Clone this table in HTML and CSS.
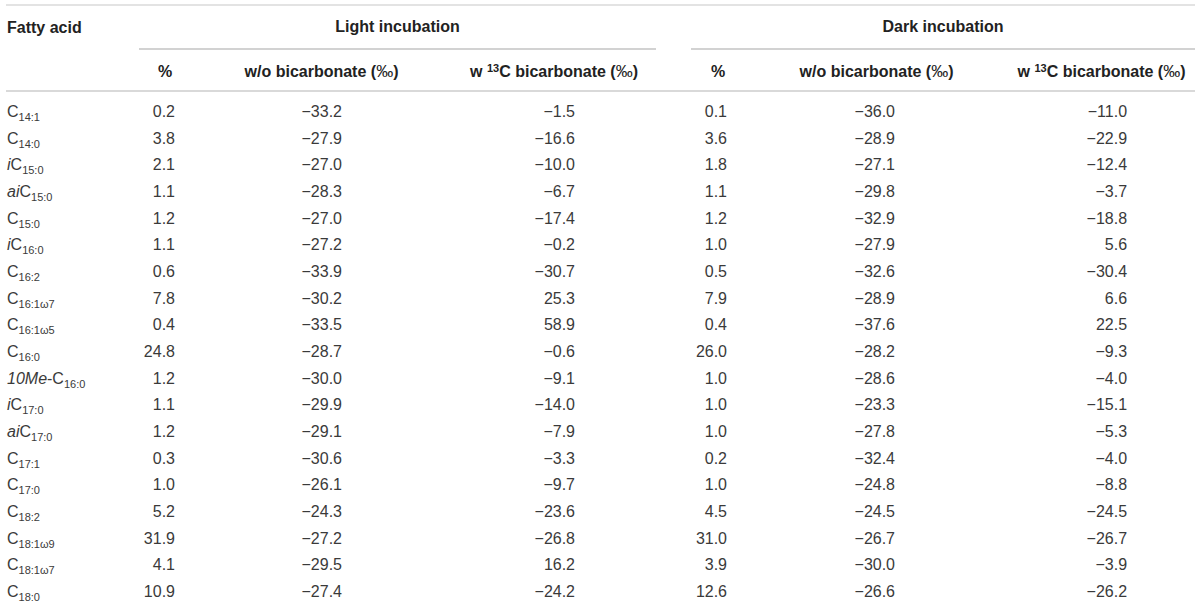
FILE: index.html
```html
<!DOCTYPE html>
<html lang="en">
<head>
    <meta charset="UTF-8">
    <meta name="viewport" content="width=device-width, initial-scale=1.0">
    <title>Fatty acid isotope table</title>
    <link rel="stylesheet" href="styles.css">
</head>
<body>
    <table class="fa-table">
        <colgroup>
            <col class="col-name">
            <col class="col-pct">
            <col class="col-wo">
            <col class="col-w13">
            <col class="col-gap">
            <col class="col-pct2">
            <col class="col-wo2">
            <col class="col-w132">
        </colgroup>
        <thead>
            <tr class="head-top">
                <th class="name-head">Fatty acid</th>
                <th colspan="3" class="group-head">Light incubation</th>
                <th class="gap"></th>
                <th colspan="3" class="group-head">Dark incubation</th>
            </tr>
            <tr class="head-sub">
                <th></th>
                <th>%</th>
                <th>w/o bicarbonate (<span class="permil">‰</span>)</th>
                <th>w <sup>13</sup>C bicarbonate (<span class="permil">‰</span>)</th>
                <th class="gap"></th>
                <th>%</th>
                <th>w/o bicarbonate (<span class="permil">‰</span>)</th>
                <th>w <sup>13</sup>C bicarbonate (<span class="permil">‰</span>)</th>
            </tr>
        </thead>
        <tbody>
            <tr class="first">
                <td>C<sub>14:1</sub></td>
                <td class="n1">0.2</td><td class="n2">−33.2</td><td class="n3">−1.5</td><td></td>
                <td class="n4">0.1</td><td class="n5">−36.0</td><td class="n6">−11.0</td>
            </tr>
            <tr>
                <td>C<sub>14:0</sub></td>
                <td class="n1">3.8</td><td class="n2">−27.9</td><td class="n3">−16.6</td><td></td>
                <td class="n4">3.6</td><td class="n5">−28.9</td><td class="n6">−22.9</td>
            </tr>
            <tr>
                <td><i>i</i>C<sub>15:0</sub></td>
                <td class="n1">2.1</td><td class="n2">−27.0</td><td class="n3">−10.0</td><td></td>
                <td class="n4">1.8</td><td class="n5">−27.1</td><td class="n6">−12.4</td>
            </tr>
            <tr>
                <td><i>ai</i>C<sub>15:0</sub></td>
                <td class="n1">1.1</td><td class="n2">−28.3</td><td class="n3">−6.7</td><td></td>
                <td class="n4">1.1</td><td class="n5">−29.8</td><td class="n6">−3.7</td>
            </tr>
            <tr>
                <td>C<sub>15:0</sub></td>
                <td class="n1">1.2</td><td class="n2">−27.0</td><td class="n3">−17.4</td><td></td>
                <td class="n4">1.2</td><td class="n5">−32.9</td><td class="n6">−18.8</td>
            </tr>
            <tr>
                <td><i>i</i>C<sub>16:0</sub></td>
                <td class="n1">1.1</td><td class="n2">−27.2</td><td class="n3">−0.2</td><td></td>
                <td class="n4">1.0</td><td class="n5">−27.9</td><td class="n6">5.6</td>
            </tr>
            <tr>
                <td>C<sub>16:2</sub></td>
                <td class="n1">0.6</td><td class="n2">−33.9</td><td class="n3">−30.7</td><td></td>
                <td class="n4">0.5</td><td class="n5">−32.6</td><td class="n6">−30.4</td>
            </tr>
            <tr>
                <td>C<sub>16:1ω7</sub></td>
                <td class="n1">7.8</td><td class="n2">−30.2</td><td class="n3">25.3</td><td></td>
                <td class="n4">7.9</td><td class="n5">−28.9</td><td class="n6">6.6</td>
            </tr>
            <tr>
                <td>C<sub>16:1ω5</sub></td>
                <td class="n1">0.4</td><td class="n2">−33.5</td><td class="n3">58.9</td><td></td>
                <td class="n4">0.4</td><td class="n5">−37.6</td><td class="n6">22.5</td>
            </tr>
            <tr>
                <td>C<sub>16:0</sub></td>
                <td class="n1">24.8</td><td class="n2">−28.7</td><td class="n3">−0.6</td><td></td>
                <td class="n4">26.0</td><td class="n5">−28.2</td><td class="n6">−9.3</td>
            </tr>
            <tr>
                <td><i>10Me</i>-C<sub>16:0</sub></td>
                <td class="n1">1.2</td><td class="n2">−30.0</td><td class="n3">−9.1</td><td></td>
                <td class="n4">1.0</td><td class="n5">−28.6</td><td class="n6">−4.0</td>
            </tr>
            <tr>
                <td><i>i</i>C<sub>17:0</sub></td>
                <td class="n1">1.1</td><td class="n2">−29.9</td><td class="n3">−14.0</td><td></td>
                <td class="n4">1.0</td><td class="n5">−23.3</td><td class="n6">−15.1</td>
            </tr>
            <tr>
                <td><i>ai</i>C<sub>17:0</sub></td>
                <td class="n1">1.2</td><td class="n2">−29.1</td><td class="n3">−7.9</td><td></td>
                <td class="n4">1.0</td><td class="n5">−27.8</td><td class="n6">−5.3</td>
            </tr>
            <tr>
                <td>C<sub>17:1</sub></td>
                <td class="n1">0.3</td><td class="n2">−30.6</td><td class="n3">−3.3</td><td></td>
                <td class="n4">0.2</td><td class="n5">−32.4</td><td class="n6">−4.0</td>
            </tr>
            <tr>
                <td>C<sub>17:0</sub></td>
                <td class="n1">1.0</td><td class="n2">−26.1</td><td class="n3">−9.7</td><td></td>
                <td class="n4">1.0</td><td class="n5">−24.8</td><td class="n6">−8.8</td>
            </tr>
            <tr>
                <td>C<sub>18:2</sub></td>
                <td class="n1">5.2</td><td class="n2">−24.3</td><td class="n3">−23.6</td><td></td>
                <td class="n4">4.5</td><td class="n5">−24.5</td><td class="n6">−24.5</td>
            </tr>
            <tr>
                <td>C<sub>18:1ω9</sub></td>
                <td class="n1">31.9</td><td class="n2">−27.2</td><td class="n3">−26.8</td><td></td>
                <td class="n4">31.0</td><td class="n5">−26.7</td><td class="n6">−26.7</td>
            </tr>
            <tr>
                <td>C<sub>18:1ω7</sub></td>
                <td class="n1">4.1</td><td class="n2">−29.5</td><td class="n3">16.2</td><td></td>
                <td class="n4">3.9</td><td class="n5">−30.0</td><td class="n6">−3.9</td>
            </tr>
            <tr>
                <td>C<sub>18:0</sub></td>
                <td class="n1">10.9</td><td class="n2">−27.4</td><td class="n3">−24.2</td><td></td>
                <td class="n4">12.6</td><td class="n5">−26.6</td><td class="n6">−26.2</td>
            </tr>
        </tbody>
    </table>
</body>
</html>
```

FILE: styles.css
```css
body {
    margin: 0;
    padding: 0;
    background-color: white;
    font-family: 'Liberation Sans', Arial, sans-serif;
    font-size: 16px;
    color: #3a3a3a;
}

.fa-table {
    width: 1189px;
    margin: 4px 5px 0 6px;
    border-collapse: separate;
    border-spacing: 0;
    table-layout: fixed;
}

.col-name { width: 133px; }
.col-pct { width: 52px; }
.col-wo { width: 261px; }
.col-w13 { width: 204px; }
.col-gap { width: 35px; }
.col-pct2 { width: 54px; }
.col-wo2 { width: 263px; }
.col-w132 { width: 187px; }

.fa-table th {
    font-weight: bold;
    color: #222;
    line-height: 20px;
    text-align: center;
    white-space: nowrap;
    padding: 0;
}

.head-top th {
    border-top: 2px solid #e3e3e3;
    padding: 11px 0;
}

.head-top .name-head {
    text-align: left;
    padding-left: 1px;
}

.head-top .group-head {
    border-bottom: 2px solid #d2d2d2;
}

.head-sub th {
    border-bottom: 2px solid #d9d9d9;
    padding: 12px 0 8px;
}

.permil {
    font-weight: normal;
    font-size: 17px;
}

.fa-table sup {
    font-size: 11px;
    line-height: 0;
    vertical-align: 5px;
}

.fa-table td {
    line-height: 26.67px;
    padding: 0;
    white-space: nowrap;
}

.fa-table tr.first td {
    padding-top: 7px;
}

.fa-table td:first-child {
    padding-left: 1px;
}

.fa-table sub {
    font-size: 11px;
    line-height: 0;
    vertical-align: -4px;
}

.fa-table td.n1,
.fa-table td.n2,
.fa-table td.n3,
.fa-table td.n4,
.fa-table td.n5,
.fa-table td.n6 {
    text-align: right;
}

.fa-table td.n1 { padding-right: 16px; }
.fa-table td.n2 { padding-right: 110px; }
.fa-table td.n3 { padding-right: 81px; }
.fa-table td.n4 { padding-right: 18px; }
.fa-table td.n5 { padding-right: 113px; }
.fa-table td.n6 { padding-right: 68px; }
```
